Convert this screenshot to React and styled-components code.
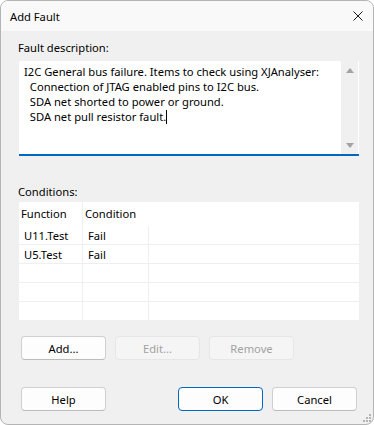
import React from "react";
import styled, { createGlobalStyle } from "styled-components";

const Global = createGlobalStyle`
  html, body { margin: 0; padding: 0; background: #ffffff; }
  body { font-family: "Noto Sans", "Liberation Sans", sans-serif; font-size: 11.2px; color: #000; }
  * { box-sizing: border-box; }
`;

const Window = styled.div`
  width: 374px;
  height: 425px;
  border: 1px solid #b4b4b4;
  border-radius: 8px;
  background: #f0f0f0;
  display: flex;
  flex-direction: column;
  overflow: hidden;
  position: relative;
`;

const TitleBar = styled.div`
  height: 30px;
  flex: none;
  background: #f9f9f9;
  display: flex;
  align-items: center;
  justify-content: space-between;
  padding: 0 10px 0 9px;
`;

const Title = styled.div`
  line-height: 15px;
`;

const CloseIcon = styled.svg`
  width: 10px;
  height: 10px;
  display: block;
`;

const Body = styled.div`
  flex: 1;
  display: flex;
  flex-direction: column;
  padding: 9px 14px 0 18px;
`;

const Label = styled.div`
  line-height: 15px;
  margin: ${(p) => p.$top || 0}px 0 0 -1px;
`;

const EditBox = styled.div`
  margin-top: 6px;
  height: 95px;
  background: #fff;
  border-bottom: 2px solid #0067c0;
  display: flex;
  padding: 0 1px 0 0;
`;

const EditText = styled.div`
  flex: 1;
  padding: 3px 0 0 5px;
  line-height: 15px;
  white-space: pre;
`;

const Caret = styled.span`
  display: inline-block;
  width: 1px;
  height: 14px;
  background: #000;
  vertical-align: -3px;
`;

const ScrollBar = styled.div`
  width: 17px;
  background: #f0f0f0;
  display: flex;
  flex-direction: column;
  justify-content: space-between;
  align-items: center;
  padding: 7px 0 6px;
`;

const Arrow = styled.svg`
  width: 8px;
  height: 5px;
  display: block;
`;

const Grid = styled.div`
  margin-top: 3px;
  height: 118px;
  background: #fff;
  display: flex;
  flex-direction: column;
`;

const HeaderRow = styled.div`
  height: 24px;
  display: flex;
`;

const HeaderCell = styled.div`
  width: ${(p) => (p.$w ? `${p.$w}px` : "auto")};
  flex: ${(p) => (p.$w ? "none" : 1)};
  border-right: ${(p) => (p.$divider ? "1px solid #efefef" : "none")};
  padding-left: 2px;
  line-height: 24px;
`;

const Row = styled.div`
  height: ${(p) => (p.$last ? 18 : 19)}px;
  display: flex;
  border-bottom: ${(p) => (p.$last ? "none" : "1px solid #efefef")};
`;

const Cell = styled.div`
  width: ${(p) => (p.$w ? `${p.$w}px` : "auto")};
  flex: ${(p) => (p.$w ? "none" : 1)};
  border-right: ${(p) => (p.$divider ? "1px solid #efefef" : "none")};
  padding: 1px 0 0 5px;
  line-height: 18px;
`;

const ButtonRow = styled.div`
  display: flex;
  gap: 9px;
  padding: 0 2px;
  margin-top: ${(p) => p.$top}px;
`;

const Spacer = styled.div`
  flex: 1;
`;

const Button = styled.button`
  width: 85px;
  height: 24px;
  font-family: inherit;
  font-size: 11.2px;
  border-radius: 4px;
  padding: 0;
  background: ${(p) => (p.disabled ? "#f5f5f5" : "#fdfdfd")};
  color: ${(p) => (p.disabled ? "#a2a2a2" : "#000")};
  border: 1px solid ${(p) => (p.$default ? "#0067c0" : p.disabled ? "#e6e6e6" : "#d0d0d0")};
  border-bottom-color: ${(p) => (p.$default ? "#0067c0" : p.disabled ? "#e6e6e6" : "#bbbbbb")};
`;

const Grip = styled.svg`
  position: absolute;
  right: 2px;
  bottom: 2px;
  width: 9px;
  height: 9px;
`;

const rows = [
  ["U11.Test", "Fail"],
  ["U5.Test", "Fail"],
  ["", ""],
  ["", ""],
  ["", ""],
];

export default function App() {
  return (
    <>
      <Global />
      <Window>
        <TitleBar>
          <Title>Add Fault</Title>
          <CloseIcon viewBox="0 0 10 10">
            <path d="M0.5 0.5 L9.5 9.5 M9.5 0.5 L0.5 9.5" stroke="#1a1a1a" strokeWidth="1" />
          </CloseIcon>
        </TitleBar>
        <Body>
          <Label>Fault description:</Label>
          <EditBox>
            <EditText>
              {"I2C General bus failure. Items to check using XJAnalyser:\n  Connection of JTAG enabled pins to I2C bus.\n  SDA net shorted to power or ground.\n  SDA net pull resistor fault."}
              <Caret />
            </EditText>
            <ScrollBar>
              <Arrow viewBox="0 0 8 5">
                <path d="M0 5 L4 0 L8 5 Z" fill="#a3a3a3" />
              </Arrow>
              <Arrow viewBox="0 0 8 5">
                <path d="M0 0 L8 0 L4 5 Z" fill="#a3a3a3" />
              </Arrow>
            </ScrollBar>
          </EditBox>
          <Label $top={28}>Conditions:</Label>
          <Grid>
            <HeaderRow>
              <HeaderCell $w={64} $divider>Function</HeaderCell>
              <HeaderCell>Condition</HeaderCell>
            </HeaderRow>
            {rows.map((r, i) => (
              <Row key={i} $last={i === rows.length - 1}>
                <Cell $w={64} $divider>{r[0]}</Cell>
                <Cell $w={66} $divider>{r[1]}</Cell>
                <Cell />
              </Row>
            ))}
          </Grid>
          <ButtonRow $top={16}>
            <Button>Add...</Button>
            <Button disabled>Edit...</Button>
            <Button disabled>Remove</Button>
          </ButtonRow>
          <ButtonRow $top={27}>
            <Button>Help</Button>
            <Spacer />
            <Button $default>OK</Button>
            <Button>Cancel</Button>
          </ButtonRow>
        </Body>
        <Grip viewBox="0 0 9 9">
          <g fill="#b5b5b5">
            <rect x="7" y="1" width="2" height="2" />
            <rect x="4" y="4" width="2" height="2" />
            <rect x="7" y="4" width="2" height="2" />
            <rect x="1" y="7" width="2" height="2" />
            <rect x="4" y="7" width="2" height="2" />
            <rect x="7" y="7" width="2" height="2" />
          </g>
        </Grip>
      </Window>
    </>
  );
}
